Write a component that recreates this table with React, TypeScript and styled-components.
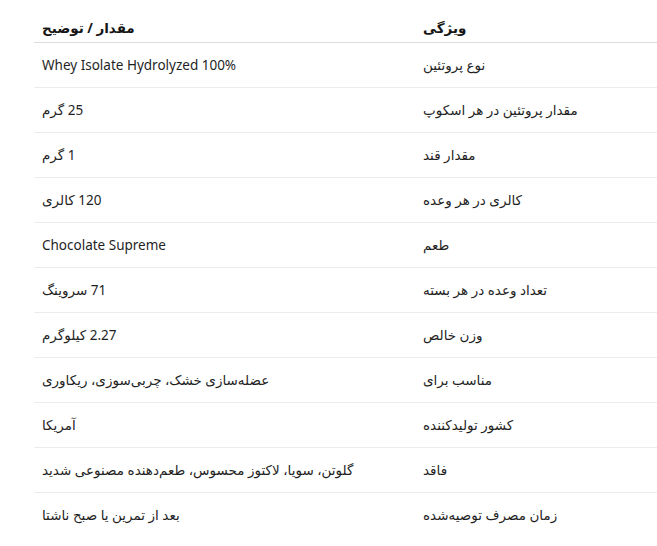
import React from "react";
import styled, { createGlobalStyle } from "styled-components";

const GlobalStyle = createGlobalStyle`
  html, body {
    margin: 0;
    padding: 0;
    background: #ffffff;
  }
  body {
    font-family: "Segoe UI", "Noto Sans", "DejaVu Sans", sans-serif;
    overflow: hidden;
  }
`;

const Page = styled.div`
  width: 657px;
  height: 546px;
  overflow: hidden;
  padding-top: 10px;
  padding-left: 34px;
  box-sizing: border-box;
`;

const Table = styled.table`
  direction: rtl;
  width: 762px;
  table-layout: fixed;
  border-collapse: collapse;
  font-size: 13.5px;
  line-height: 20px;
  color: #1f1f1f;
`;

const HeadCell = styled.th`
  text-align: left;
  font-weight: 700;
  color: #161616;
  padding: 8px 8px 4px;
  border-bottom: 1px solid #dcdcdc;
`;

const Row = styled.tr`
  &:last-child td {
    border-bottom: none;
  }
`;

const Cell = styled.td`
  text-align: left;
  padding: 12px 8px;
  border-bottom: 1px solid #ececec;
  white-space: nowrap;
`;

const rows: [string, string][] = [
  ["نوع پروتئین", "Whey Isolate Hydrolyzed 100%"],
  ["مقدار پروتئین در هر اسکوپ", "25 گرم"],
  ["مقدار قند", "1 گرم"],
  ["کالری در هر وعده", "120 کالری"],
  ["طعم", "Chocolate Supreme"],
  ["تعداد وعده در هر بسته", "71 سروینگ"],
  ["وزن خالص", "2.27 کیلوگرم"],
  ["مناسب برای", "عضله‌سازی خشک، چربی‌سوزی، ریکاوری"],
  ["کشور تولیدکننده", "آمریکا"],
  ["فاقد", "گلوتن، سویا، لاکتوز محسوس، طعم‌دهنده مصنوعی شدید"],
  ["زمان مصرف توصیه‌شده", "بعد از تمرین یا صبح ناشتا"],
];

export default function App() {
  return (
    <>
      <GlobalStyle />
      <Page>
        <Table>
          <thead>
            <tr>
              <HeadCell>ویژگی</HeadCell>
              <HeadCell>مقدار / توضیح</HeadCell>
            </tr>
          </thead>
          <tbody>
            {rows.map(([k, v]) => (
              <Row key={k}>
                <Cell>{k}</Cell>
                <Cell>{v}</Cell>
              </Row>
            ))}
          </tbody>
        </Table>
      </Page>
    </>
  );
}
